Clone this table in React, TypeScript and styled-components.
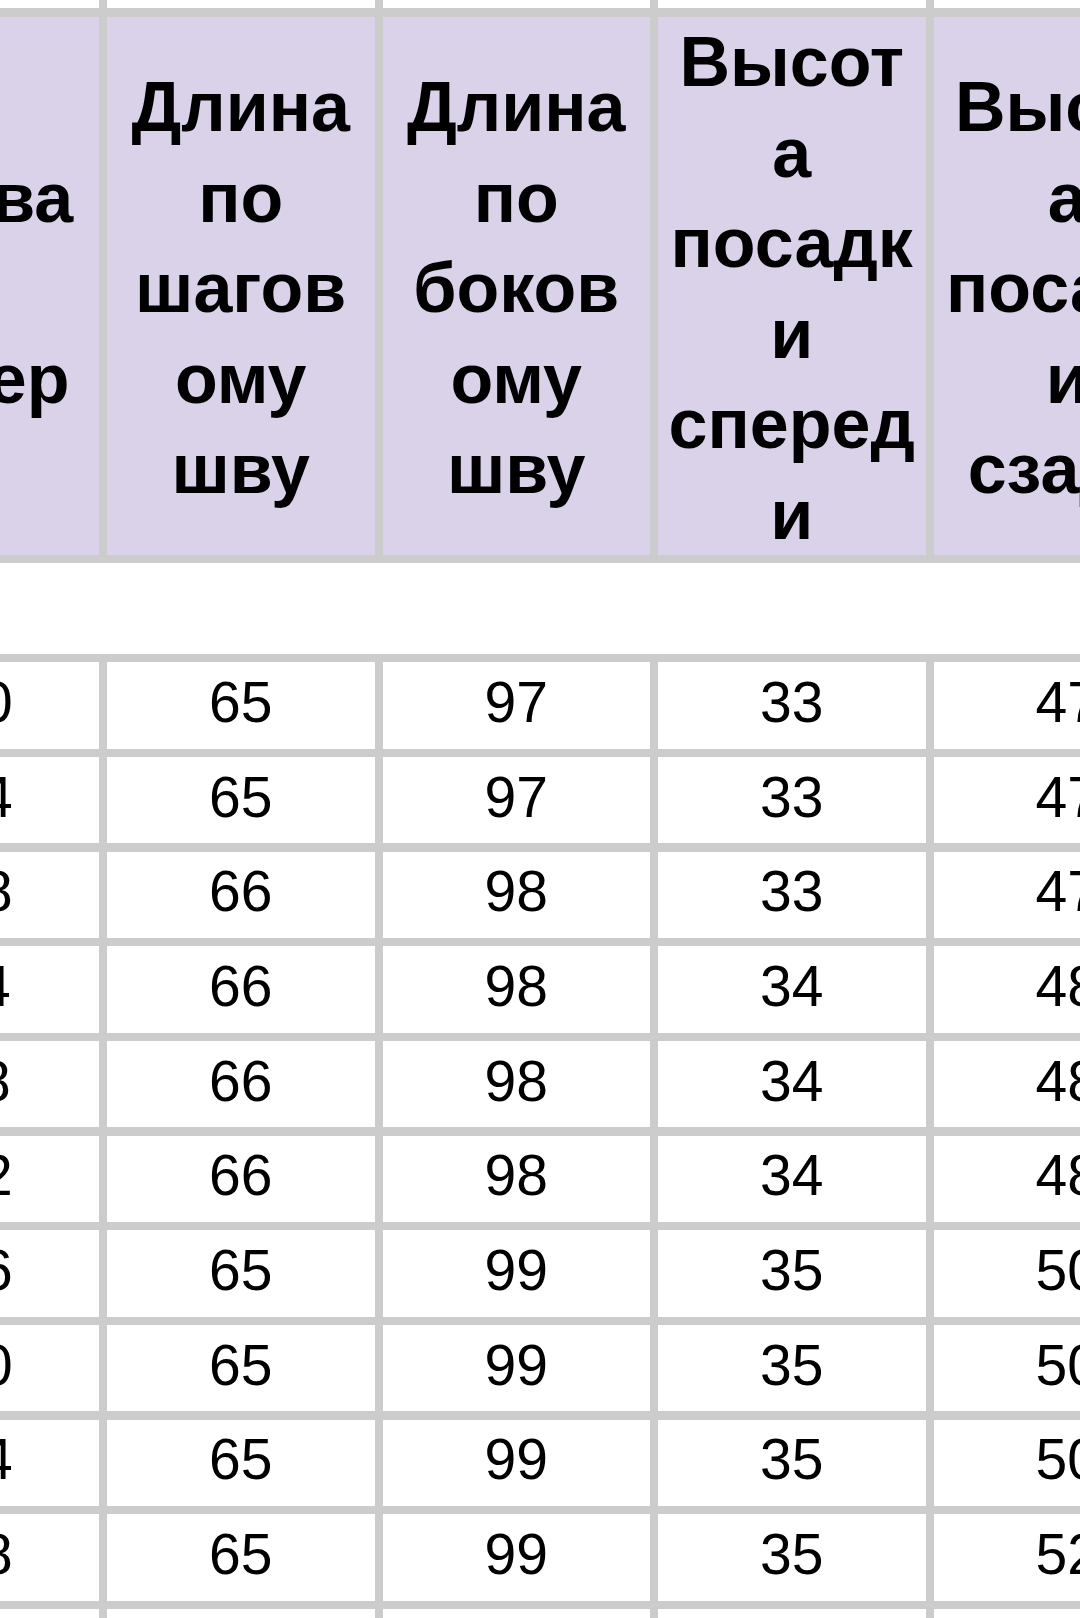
// Import libraries
import React from "react";
import styled, { createGlobalStyle } from "styled-components";

// Styles
const GlobalStyle = createGlobalStyle`
  html, body {
    margin: 0;
    padding: 0;
    background: #ffffff;
  }
`;

const Viewport = styled.div`
  width: 1080px;
  height: 1618px;
  overflow: hidden;
  background: #ffffff;
`;

const Table = styled.div`
  display: grid;
  grid-template-columns: 99px repeat(3, 267.5px) 1fr;
  grid-template-rows: 8.3px 538px 91px repeat(10, 86.4px);
  grid-auto-rows: 40px;
  column-gap: 8px;
  row-gap: 8.3px;
  background: #cccccc;
  font-family: "Liberation Sans", Arial, sans-serif;
  color: #000000;
`;

type Edge = "left" | "right" | "none";

const Cell = styled.div<{ $head?: boolean; $edge?: Edge }>`
  display: flex;
  align-items: center;
  justify-content: ${(p) =>
    p.$edge === "left" ? "flex-end" : p.$edge === "right" ? "flex-start" : "center"};
  overflow: hidden;
  background: ${(p) => (p.$head ? "#d9d2e9" : "#ffffff")};
`;

const Spacer = styled.div`
  grid-column: 1 / -1;
  background: #ffffff;
`;

const Content = styled.div`
  width: 267.5px;
  flex-shrink: 0;
  text-align: center;
`;

const HeadText = styled(Content)`
  font-weight: 700;
  font-size: 70px;
  line-height: 90.5px;
  padding-top: 6px;
`;

const Line = styled.span`
  display: block;
  white-space: nowrap;
`;

const Value = styled(Content)`
  font-size: 57px;
  line-height: 1;
  padding-bottom: 6px;
`;

// Data
const headers: string[][] = [
  ["Обхва", "т", "бедер"],
  ["Длина", "по", "шагов", "ому", "шву"],
  ["Длина", "по", "боков", "ому", "шву"],
  ["Высот", "а", "посадк", "и", "сперед", "и"],
  ["Высот", "а", "посадк", "и", "сзади"],
];

const rows: number[][] = [
  [100, 65, 97, 33, 47],
  [104, 65, 97, 33, 47],
  [108, 66, 98, 33, 47],
  [114, 66, 98, 34, 48],
  [118, 66, 98, 34, 48],
  [122, 66, 98, 34, 48],
  [126, 65, 99, 35, 50],
  [130, 65, 99, 35, 50],
  [134, 65, 99, 35, 50],
  [138, 65, 99, 35, 52],
];

const edgeOf = (i: number, n: number): Edge =>
  i === 0 ? "left" : i === n - 1 ? "right" : "none";

// Component
const App: React.FC = () => {
  return (
    <Viewport>
      <GlobalStyle />
      <Table>
        {headers.map((_, i) => (
          <Cell key={`top-${i}`} $edge={edgeOf(i, headers.length)} />
        ))}
        {headers.map((lines, i) => (
          <Cell key={`h-${i}`} $head $edge={edgeOf(i, headers.length)}>
            <HeadText>
              {lines.map((line, j) => (
                <Line key={j}>{line}</Line>
              ))}
            </HeadText>
          </Cell>
        ))}
        <Spacer />
        {rows.map((row, r) =>
          row.map((value, i) => (
            <Cell key={`r-${r}-${i}`} $edge={edgeOf(i, row.length)}>
              <Value>{value}</Value>
            </Cell>
          ))
        )}
        {headers.map((_, i) => (
          <Cell key={`bottom-${i}`} $edge={edgeOf(i, headers.length)} />
        ))}
      </Table>
    </Viewport>
  );
};

export default App;
